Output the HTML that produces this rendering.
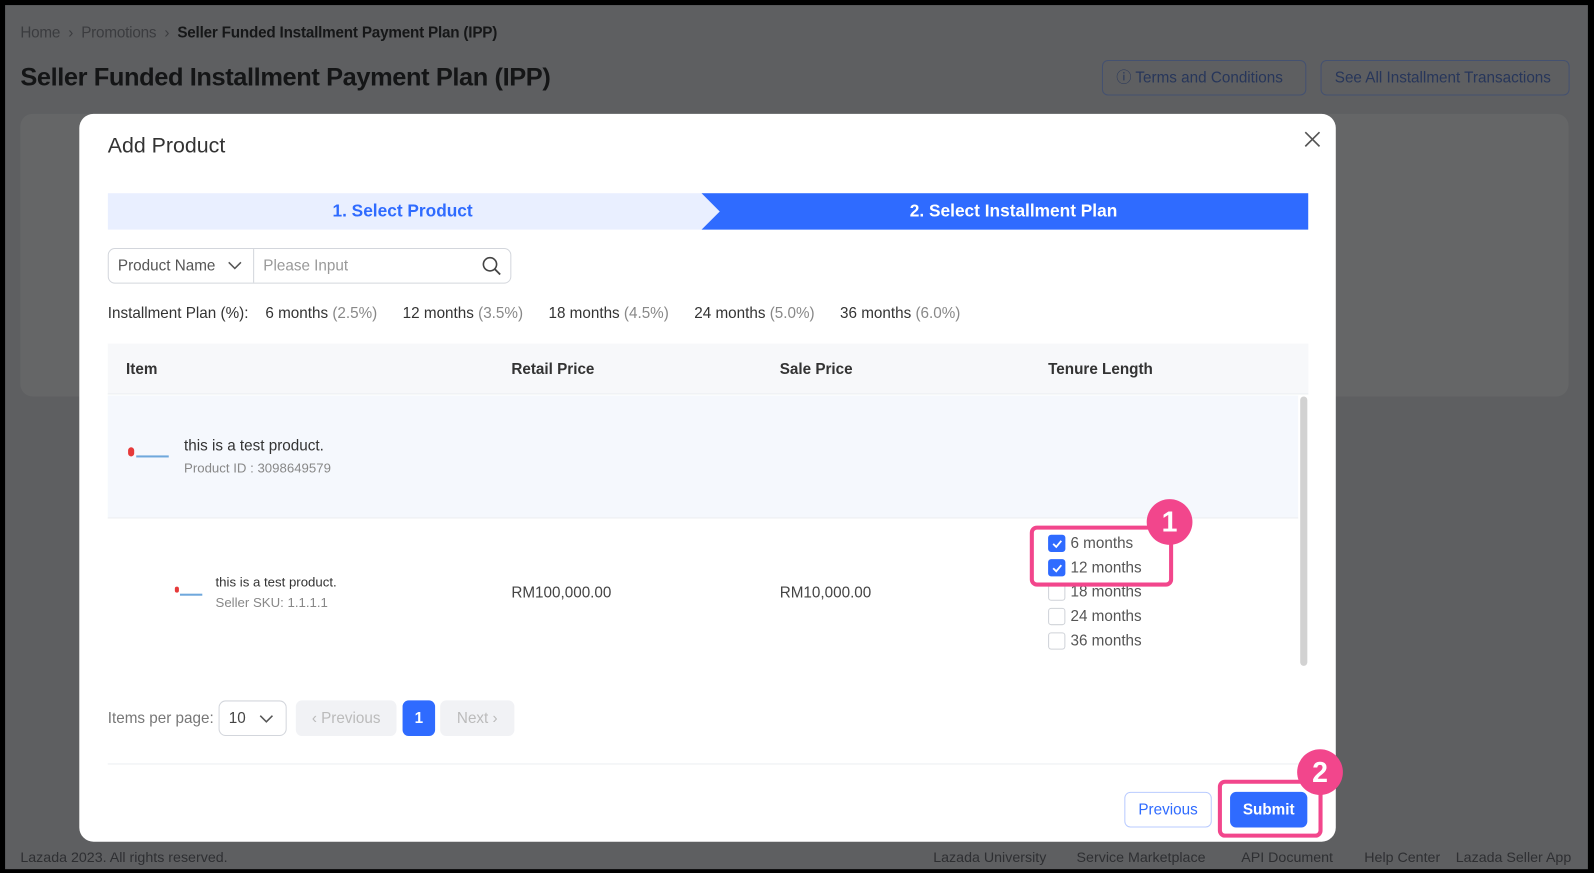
<!DOCTYPE html>
<html><head><meta charset="utf-8"><style>
*{box-sizing:border-box;margin:0;padding:0}
html,body{width:1594px;height:873px;overflow:hidden;background:#000}
#w{position:absolute;left:0;top:0;width:1568px;height:859px;transform:scale(1.01658);transform-origin:0 0;font-family:"Liberation Sans",sans-serif}
.a{position:absolute;white-space:nowrap}
#bg{position:absolute;left:5px;top:5px;width:1557px;height:850px;background:#5e5f61}
.ob{border:1px solid #445170;border-radius:6px;color:#27365a;font-size:15px;height:35px;line-height:33px;padding:0 13px}
#modal{position:absolute;left:78px;top:112px;width:1236px;height:716px;background:#fff;border-radius:14px}
.cb{position:absolute;width:17px;height:17px;border:1px solid #cfd2d8;border-radius:3px;background:#fff}
.cb.on{background:#2f6bff;border-color:#2f6bff}
.pink{position:absolute;border:4px solid #f2468c;border-radius:7px}
.circ{position:absolute;width:45px;height:45px;border-radius:50%;background:#f2468c;color:#fff;font-weight:bold;font-size:28px;text-align:center;line-height:45px}
.ft{position:absolute;top:835px;font-size:14px;color:#2e2f32;white-space:nowrap}
</style></head><body><div id="w">
<div id="bg"></div>
<div class="a" style="left:20px;top:24px;font-size:15px;color:#3b3c3f;letter-spacing:-0.2px">Home &nbsp;›&nbsp; Promotions &nbsp;›&nbsp; <b style="color:#161718">Seller Funded Installment Payment Plan (IPP)</b></div>
<div class="a" style="left:20px;top:62px;font-size:25px;font-weight:bold;color:#141516;letter-spacing:-0.4px">Seller Funded Installment Payment Plan (IPP)</div>
<div class="a ob" style="left:1084px;top:59px;width:201px">ⓘ Terms and Conditions</div>
<div class="a ob" style="left:1299px;top:59px;width:245px">See All Installment Transactions</div>
<div class="a" style="left:20px;top:112px;width:1523px;height:278px;background:#656667;border-radius:12px"></div>
<div class="ft" style="left:20px">Lazada 2023. All rights reserved.</div>
<div class="ft" style="left:918px">Lazada University</div>
<div class="ft" style="left:1059px">Service Marketplace</div>
<div class="ft" style="left:1221px">API Document</div>
<div class="ft" style="left:1342px">Help Center</div>
<div class="ft" style="left:1432px">Lazada Seller App</div>

<div id="modal">
<div class="a" style="left:28px;top:20px;font-size:21px;color:#333">Add Product</div>
<svg class="a" style="left:1205px;top:17px" width="16" height="16"><path d="M1 1L15 15M15 1L1 15" stroke="#555" stroke-width="1.6"/></svg>
<svg class="a" style="left:28px;top:78px" width="1181" height="36"><polygon points="0,0 584,0 602,18 584,36 0,36" fill="#e9efff"/><polygon points="584,0 1181,0 1181,36 584,36 602,18" fill="#2f6bff"/></svg>
<div class="a" style="left:28px;top:86px;width:580px;text-align:center;font-size:17px;font-weight:bold;color:#2f6bff">1. Select Product</div>
<div class="a" style="left:629px;top:86px;width:580px;text-align:center;font-size:17px;font-weight:bold;color:#fff">2. Select Installment Plan</div>
<div class="a" style="left:28px;top:132px;width:397px;height:35px;border:1px solid #d3d6dc;border-radius:7px"></div>
<div class="a" style="left:171px;top:133px;width:1px;height:33px;background:#d3d6dc"></div>
<div class="a" style="left:38px;top:141px;font-size:15px;color:#555">Product Name</div>
<svg class="a" style="left:146px;top:144px" width="14" height="10"><path d="M1 2L7 8L13 2" fill="none" stroke="#555" stroke-width="1.5"/></svg>
<div class="a" style="left:181px;top:141px;font-size:15px;color:#999">Please Input</div>
<svg class="a" style="left:396px;top:140px" width="20" height="20"><circle cx="8" cy="8" r="6.5" fill="none" stroke="#444" stroke-width="1.6"/><path d="M13 13L18 18" stroke="#444" stroke-width="1.8"/></svg>
<div class="a" style="left:28px;top:188px;font-size:15px;color:#333">Installment Plan (%):&nbsp;&nbsp;&nbsp; 6 months <span style="color:#888">(2.5%)</span>&nbsp;&nbsp;&nbsp;&nbsp;&nbsp; 12 months <span style="color:#888">(3.5%)</span>&nbsp;&nbsp;&nbsp;&nbsp;&nbsp; 18 months <span style="color:#888">(4.5%)</span>&nbsp;&nbsp;&nbsp;&nbsp;&nbsp; 24 months <span style="color:#888">(5.0%)</span>&nbsp;&nbsp;&nbsp;&nbsp;&nbsp; 36 months <span style="color:#888">(6.0%)</span></div>
<div class="a" style="left:28px;top:226px;width:1181px;height:50px;background:#f7f8fa;border-bottom:1px solid #eceef1"></div>
<div class="a" style="left:46px;top:243px;font-size:15px;font-weight:bold;color:#333">Item</div>
<div class="a" style="left:425px;top:243px;font-size:15px;font-weight:bold;color:#333">Retail Price</div>
<div class="a" style="left:689px;top:243px;font-size:15px;font-weight:bold;color:#333">Sale Price</div>
<div class="a" style="left:953px;top:243px;font-size:15px;font-weight:bold;color:#333">Tenure Length</div>
<div class="a" style="left:28px;top:277px;width:1171px;height:121px;background:#f5f8fd;border-bottom:1px solid #eceef1"></div>
<div class="a" style="left:48px;top:328px;width:6px;height:9px;background:#e63a3a;border-radius:3px"></div>
<div class="a" style="left:56px;top:336px;width:32px;height:2px;background:#6fa8dc"></div>
<div class="a" style="left:103px;top:318px;font-size:15px;color:#333">this is a test product.</div>
<div class="a" style="left:103px;top:341px;font-size:13px;color:#888">Product ID : 3098649579</div>
<div class="a" style="left:94px;top:465px;width:4px;height:6px;background:#e63a3a;border-radius:2px"></div>
<div class="a" style="left:99px;top:472px;width:22px;height:2px;background:#6fa8dc"></div>
<div class="a" style="left:134px;top:453px;font-size:13px;color:#333">this is a test product.</div>
<div class="a" style="left:134px;top:473px;font-size:13px;color:#888">Seller SKU: 1.1.1.1</div>
<div class="a" style="left:425px;top:463px;font-size:15px;color:#444">RM100,000.00</div>
<div class="a" style="left:689px;top:463px;font-size:15px;color:#444">RM10,000.00</div>
<div class="a" style="left:1201px;top:278px;width:7px;height:265px;background:#d2d2d2;border-radius:4px"></div>
<div class="cb on" style="left:953px;top:414px"><svg width="15" height="15"><path d="M4 8L7 11L12 5" fill="none" stroke="#fff" stroke-width="1.8"/></svg></div>
<div class="cb on" style="left:953px;top:438px"><svg width="15" height="15"><path d="M4 8L7 11L12 5" fill="none" stroke="#fff" stroke-width="1.8"/></svg></div>
<div class="cb" style="left:953px;top:462px"></div>
<div class="cb" style="left:953px;top:486px"></div>
<div class="cb" style="left:953px;top:510px"></div>
<div class="a" style="left:975px;top:411px;font-size:15px;color:#555;line-height:24px">6 months<br>12 months<br>18 months<br>24 months<br>36 months</div>
<div class="a" style="left:28px;top:586px;font-size:15px;color:#777">Items per page:</div>
<div class="a" style="left:137px;top:577px;width:67px;height:35px;border:1px solid #d3d6dc;border-radius:7px;font-size:15px;color:#444;padding:8px 0 0 9px">10</div>
<svg class="a" style="left:177px;top:590px" width="14" height="10"><path d="M1 2L7 8L13 2" fill="none" stroke="#555" stroke-width="1.5"/></svg>
<div class="a" style="left:213px;top:577px;width:99px;height:35px;background:#f1f2f5;border-radius:6px;font-size:15px;color:#bbb;line-height:35px;text-align:center">‹ Previous</div>
<div class="a" style="left:318px;top:577px;width:32px;height:35px;background:#2f6bff;border-radius:6px;font-size:15px;color:#fff;font-weight:bold;line-height:35px;text-align:center">1</div>
<div class="a" style="left:355px;top:577px;width:73px;height:35px;background:#f1f2f5;border-radius:6px;font-size:15px;color:#bbb;line-height:35px;text-align:center">Next ›</div>
<div class="a" style="left:28px;top:639px;width:1181px;height:1px;background:#eceef1"></div>
<div class="a" style="left:1028px;top:667px;width:86px;height:35px;border:1px solid #b9cbff;border-radius:6px;font-size:15px;color:#2f6bff;line-height:33px;text-align:center">Previous</div>
<div class="a" style="left:1132px;top:667px;width:76px;height:35px;background:#2f6bff;border-radius:6px;font-size:15px;color:#fff;font-weight:bold;line-height:35px;text-align:center">Submit</div>
</div>
<div class="pink" style="left:1013px;top:517px;width:141px;height:60px"></div>
<div class="circ" style="left:1128px;top:491px">1</div>
<div class="pink" style="left:1198px;top:767px;width:103px;height:57px"></div>
<div class="circ" style="left:1276px;top:737px">2</div>
</div></body></html>
